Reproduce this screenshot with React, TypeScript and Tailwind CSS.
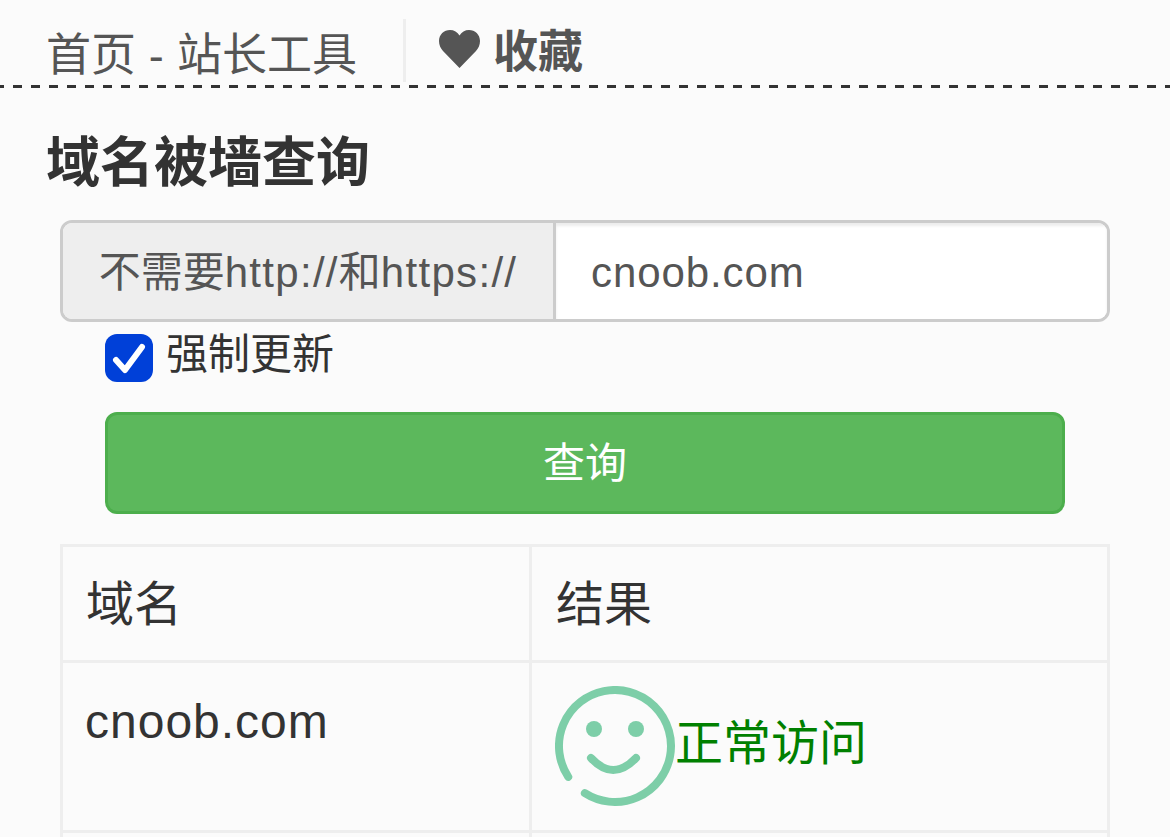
const font = "font-['Liberation_Sans','Noto_Sans_CJK_SC',sans-serif]"

function SmileIcon() {
  return (
    <svg viewBox="0 0 120 120" className="mb-[2px] h-[120px] w-[120px] shrink-0" fill="none">
      <path d="M13.25 90.84 A56 56 0 1 1 29.87 107.2" stroke="#7dcea8" strokeWidth="8" strokeLinecap="round" />
      <circle cx="39" cy="43" r="8" fill="#7dcea8" />
      <circle cx="81" cy="43" r="8" fill="#7dcea8" />
      <path d="M36 72 Q58 96 81 72" stroke="#7dcea8" strokeWidth="8" strokeLinecap="round" />
    </svg>
  )
}

export default function App() {
  return (
    <div className={`${font} h-[837px] w-[1170px] overflow-hidden bg-[#fbfbfb] text-[#333]`}>
      <header className="flex h-[85px] items-start pl-[46px]">
        <span className="mt-[29px] text-[45px] leading-[54px] text-[#555]">
          首页<span className="tracking-[0.3px]"> - </span>站长工具
        </span>
        <div className="ml-[46px] mt-[19px] h-[63px] w-[3px] bg-[#eee]" />
        <div className="ml-[33px] mt-[26px] flex items-center gap-[13px] text-[#555]">
          <svg viewBox="0 0 41 38" className="mb-[8px] h-[38px] w-[41px]">
            <path d="M20.5 38 L4 21 C1.5 18 0 15 0 11 C0 4.5 5 0 11 0 C15 0 18.500 2 20.500 5.500 C22.500 2 26 0 30 0 C36 0 41 4.500 41 11 C41 15 39.500 18 37 21 Z" fill="#555" />
          </svg>
          <span className="text-[45px] font-bold leading-[54px]">收藏</span>
        </div>
      </header>
      <div className="h-[3px] bg-[repeating-linear-gradient(90deg,#333_0_4.5px,transparent_4.5px_13.5px,#333_13.5px_18px)]" />

      <h1 className="ml-[46px] mt-[40px] text-[54px] font-bold leading-[70px]">域名被墙查询</h1>

      <div className="mx-[60px] mt-[22px] flex h-[102px] overflow-hidden rounded-[12px] border-[3px] border-[#ccc]">
        <div className="flex w-[493px] items-center justify-center border-r-[3px] border-[#ccc] bg-[#eee] pt-[2px] text-[42px] text-[#555]">
          不需要<span className="tracking-[1.3px]">http://</span>和<span className="tracking-[1.3px]">https://</span>
        </div>
        <div className="flex flex-1 items-center bg-white pl-[35px] pt-[2px] text-[42px] tracking-[0.9px] text-[#555] shadow-[inset_0_3px_3px_rgba(0,0,0,0.075)]">
          cnoob.com
        </div>
      </div>

      <div className="ml-[105px] mt-[6px] flex items-start gap-[13px]">
        <div className="mt-[6px] flex h-[48px] w-[48px] items-center justify-center rounded-[12px] bg-[#0040d8]">
          <svg viewBox="0 0 48 48" className="h-[48px] w-[48px]" fill="none">
            <path d="M11 26 L20 36 L37 13" stroke="#fff" strokeWidth="6" strokeLinecap="round" strokeLinejoin="round" />
          </svg>
        </div>
        <span className="text-[42px] leading-[54px]">强制更新</span>
      </div>

      <button className="mx-[105px] mt-[30px] flex h-[102px] w-[960px] items-center justify-center rounded-[12px] border-[3px] border-[#4cae4c] bg-[#5cb85c] text-[42px] text-white">
        查询
      </button>

      <div className="mx-[60px] mt-[30px] grid grid-cols-[469px_1fr] border-l-[3px] border-t-[3px] border-[#eee] text-[48px]">
        <div className="h-[116px] border-b-[3px] border-r-[3px] border-[#eee] pl-[23px] pt-[26px] leading-[64px]">域名</div>
        <div className="h-[116px] border-b-[3px] border-r-[3px] border-[#eee] pl-[24px] pt-[26px] leading-[64px]">结果</div>
        <div className="h-[170px] border-b-[3px] border-r-[3px] border-[#eee] pl-[22px] pt-[27px] leading-[64px] tracking-[1px]">cnoob.com</div>
        <div className="flex h-[170px] items-center border-b-[3px] border-r-[3px] border-[#eee] pl-[23px]">
          <SmileIcon />
          <span className="mb-[6px] leading-[64px] text-[#008000]">正常访问</span>
        </div>
        <div className="h-[40px] border-r-[3px] border-[#eee]" />
        <div className="h-[40px] border-r-[3px] border-[#eee]" />
      </div>
    </div>
  )
}
